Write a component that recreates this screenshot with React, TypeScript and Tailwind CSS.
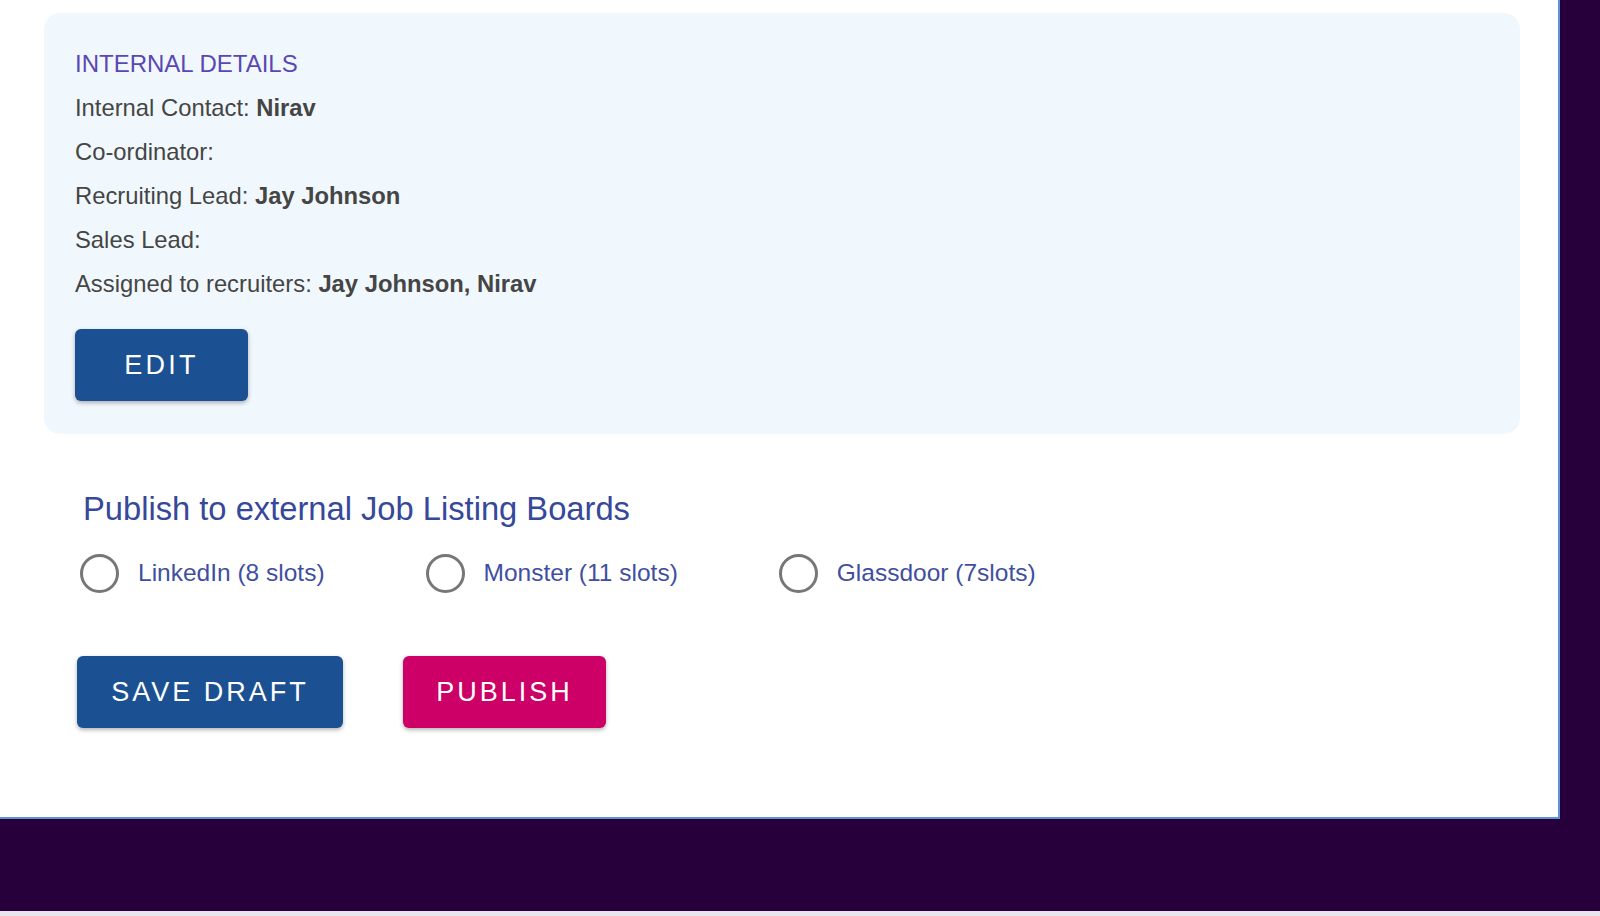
import React from "react";

const rows: { label: string; value?: string }[] = [
  { label: "Internal Contact:", value: "Nirav" },
  { label: "Co-ordinator:" },
  { label: "Recruiting Lead:", value: "Jay Johnson" },
  { label: "Sales Lead:" },
  { label: "Assigned to recruiters:", value: "Jay Johnson, Nirav" },
];

const boards = ["LinkedIn (8 slots)", "Monster (11 slots)", "Glassdoor (7slots)"];

export default function App() {
  return (
    <div className="w-[1600px] h-[916px] bg-[#27003b] flex flex-col overflow-hidden font-['Liberation_Sans',Arial,sans-serif]">
      <div className="w-[1560px] h-[819px] shrink-0 bg-white border-r-2 border-b-2 border-[#5d94d8] pt-[13px]">
        <section className="ml-[44px] w-[1476px] rounded-2xl bg-[#f1f8fd] pl-[31px] pt-[29px] pb-[33px]">
          <div className="leading-[44px] text-[24px] text-[#5a47b3]">INTERNAL DETAILS</div>
          {rows.map((r) => (
            <div key={r.label} className="leading-[44px] text-[23.8px] text-[#454545]">
              {r.label}
              {r.value ? <span className="font-bold"> {r.value}</span> : null}
            </div>
          ))}
          <button className="mt-[23px] w-[173px] h-[72px] rounded-md bg-[#1b5192] text-white text-[27px] tracking-[3.2px] shadow-[0_2px_4px_rgba(0,0,0,0.3)] flex items-center justify-center">
            EDIT
          </button>
        </section>

        <h2 className="ml-[83px] mt-[55px] leading-[40px] text-[32.7px] text-[#35489a]">
          Publish to external Job Listing Boards
        </h2>

        <div className="ml-[80px] mt-[25px] flex items-center gap-[101px]">
          {boards.map((b) => (
            <label key={b} className="flex items-center gap-[19px]">
              <span className="w-[39px] h-[39px] rounded-full border-[3px] border-[#777777] bg-white" />
              <span className="text-[24.5px] text-[#3f4f9f]">{b}</span>
            </label>
          ))}
        </div>

        <div className="ml-[77px] mt-[63px] flex gap-[60px]">
          <button className="w-[266px] h-[72px] rounded-md bg-[#1b5192] text-white text-[27px] tracking-[3px] shadow-[0_2px_4px_rgba(0,0,0,0.3)] flex items-center justify-center">
            SAVE DRAFT
          </button>
          <button className="w-[203px] h-[72px] rounded-md bg-[#cc0066] text-white text-[27px] tracking-[3px] shadow-[0_2px_4px_rgba(0,0,0,0.3)] flex items-center justify-center">
            PUBLISH
          </button>
        </div>
      </div>
      <div className="flex-1" />
      <div className="h-[5px] bg-[#e9e5ec]" />
    </div>
  );
}
